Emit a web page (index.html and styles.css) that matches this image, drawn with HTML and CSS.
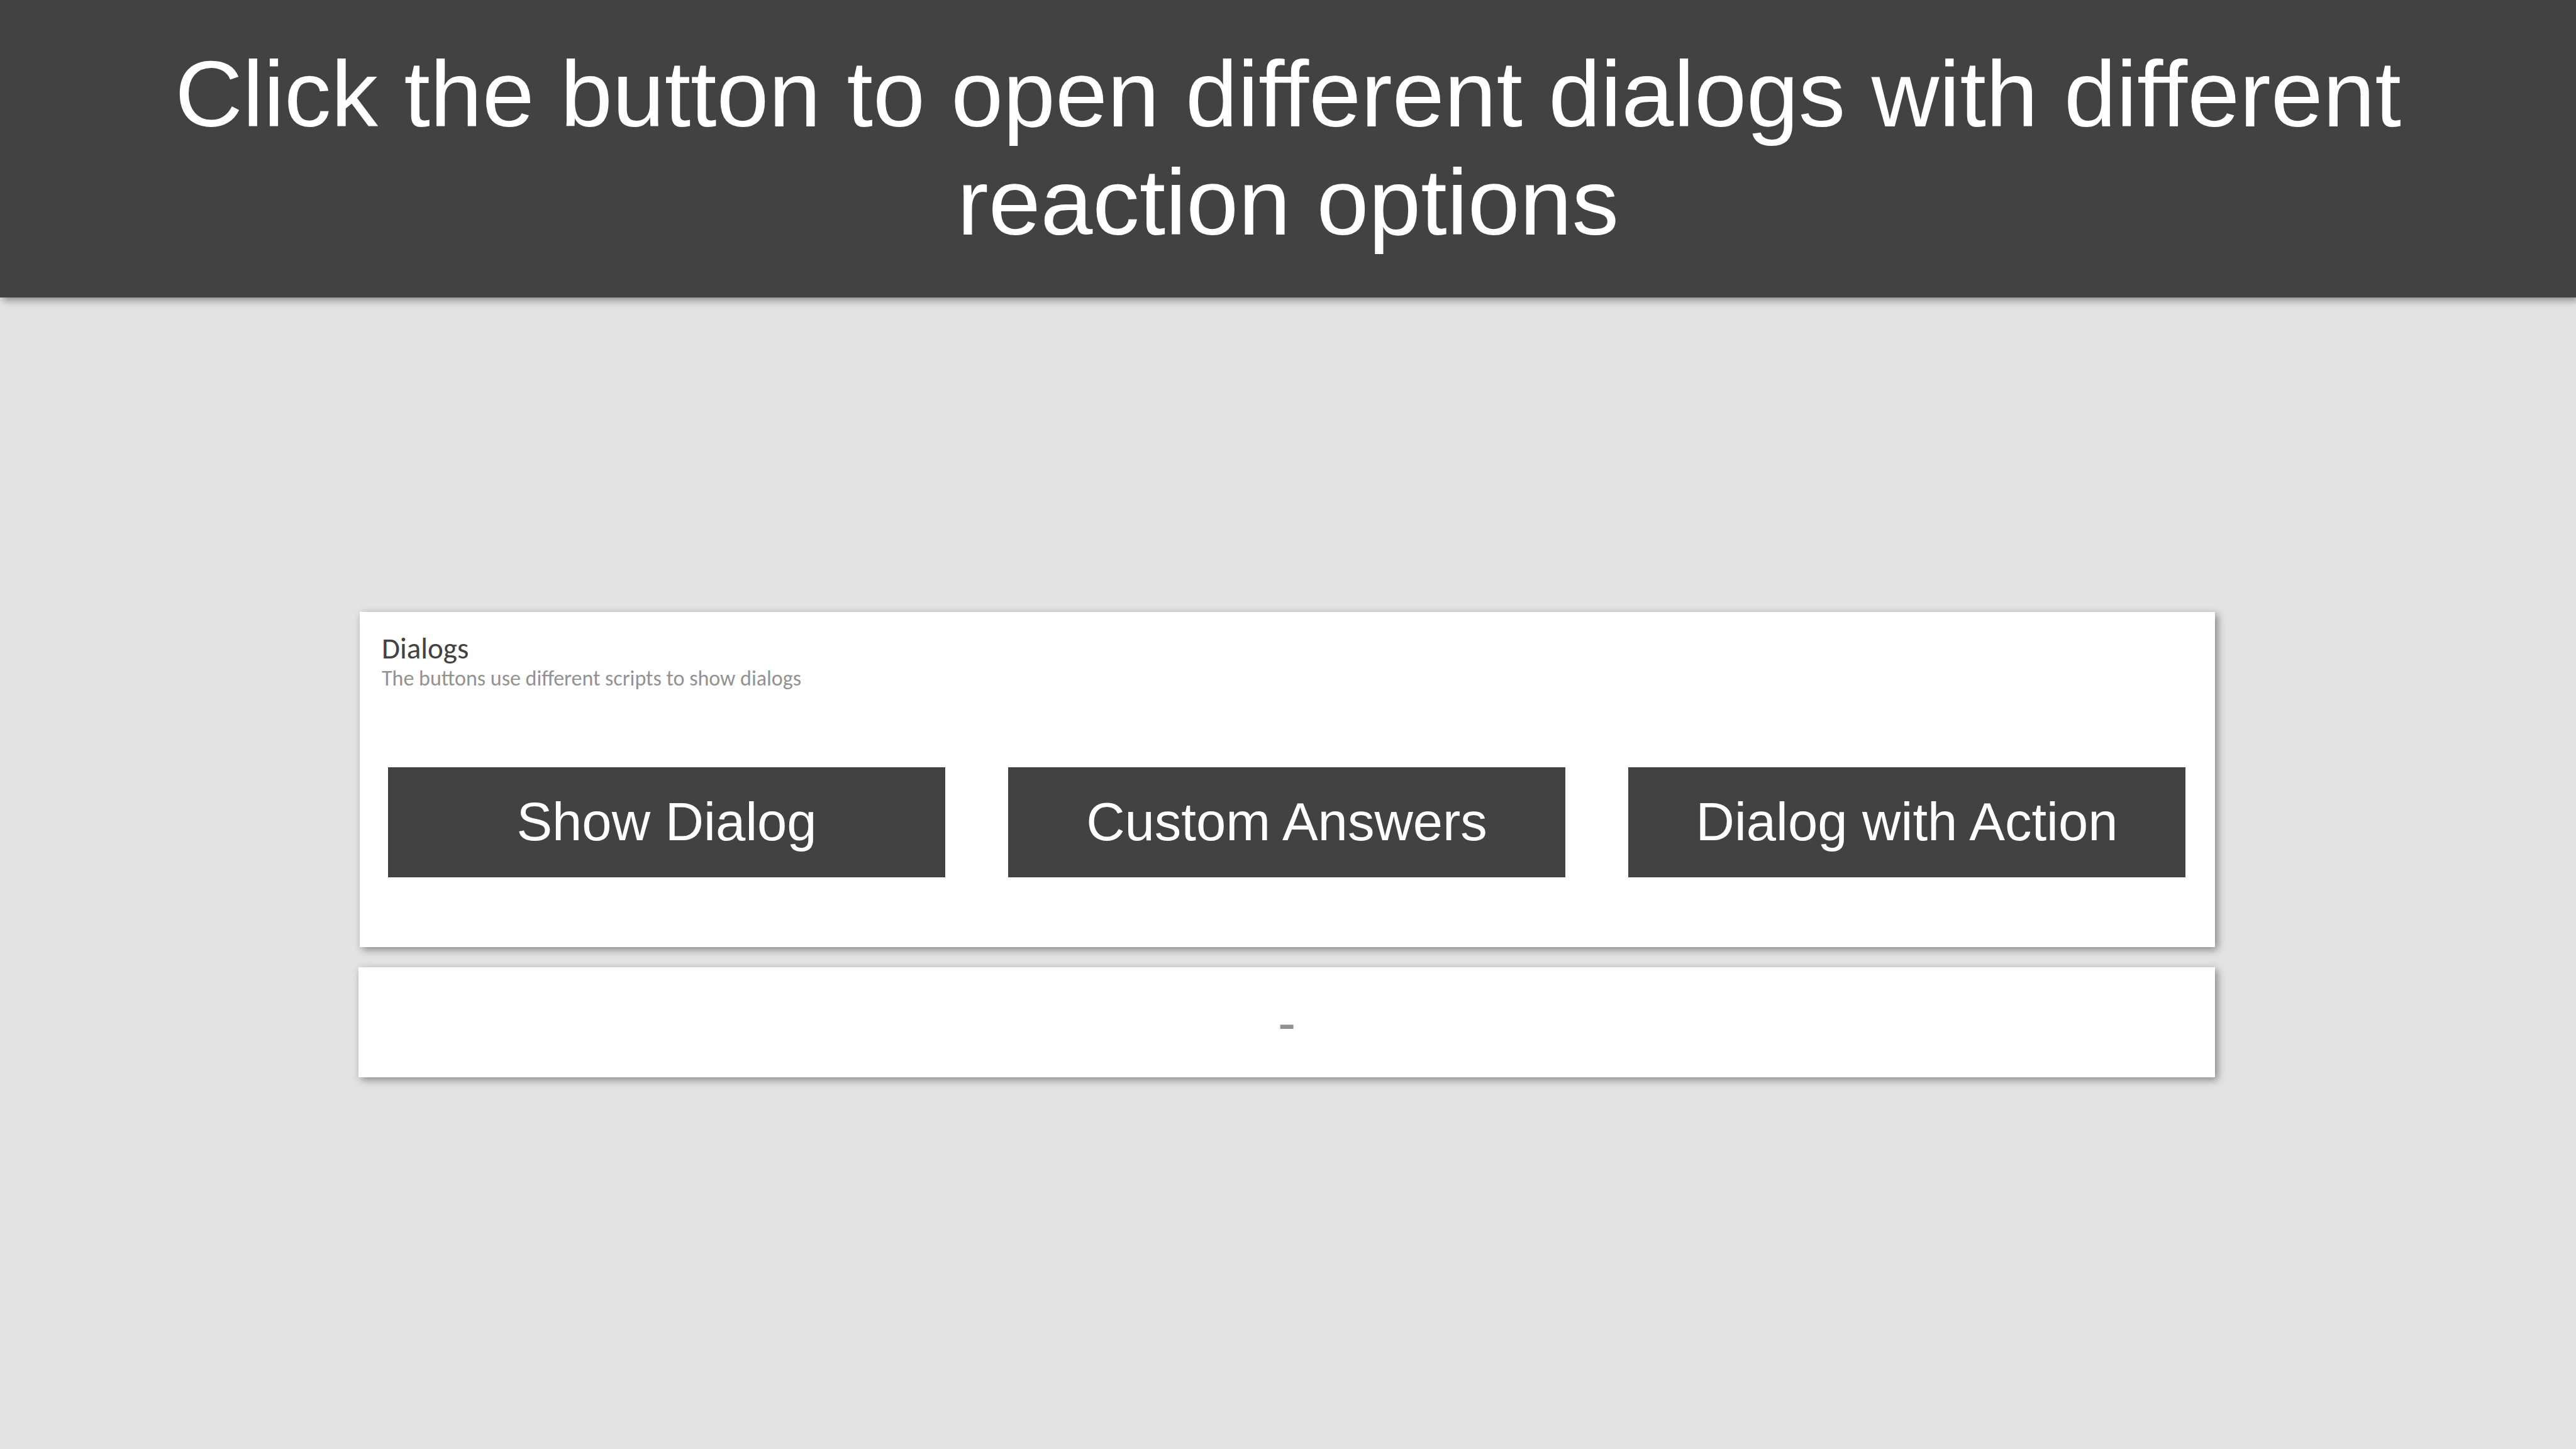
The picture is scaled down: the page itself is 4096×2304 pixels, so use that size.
FILE: index.html
```
<!DOCTYPE html>
<html lang="en">
<head>
<meta charset="utf-8">
<title>Dialogs</title>
<link rel="stylesheet" href="styles.css">
</head>
<body>
<header class="banner">
  <h1 class="banner-title">Click the button to open different dialogs with different reaction options</h1>
</header>
<main class="content">
  <section class="card dialogs" aria-labelledby="dialogs-title">
    <h2 class="card-title" id="dialogs-title">Dialogs</h2>
    <p class="card-subtitle">The buttons use different scripts to show dialogs</p>
    <div class="actions">
      <button class="action" type="button">Show Dialog</button>
      <button class="action" type="button">Custom Answers</button>
      <button class="action" type="button">Dialog with Action</button>
    </div>
  </section>
  <output class="card result">-</output>
</main>
</body>
</html>
```
FILE: styles.css
```
* {
  box-sizing: border-box;
}

body {
  margin: 0;
  min-height: 100vh;
  background: #e3e3e3;
  font-family: "Liberation Sans", Arial, sans-serif;
}

.banner {
  padding: 64px 200px 65px;
  background: #424242;
  box-shadow: 4px 4px 12px rgba(0, 0, 0, 0.42);
}

.banner-title {
  margin: 0;
  color: #fff;
  font-size: 149px;
  font-weight: 400;
  line-height: 172px;
  text-align: center;
}

.content {
  display: flex;
  flex-direction: column;
  gap: 32px;
  padding: 500px 574px 0 570px;
}

.card {
  background: #fff;
  box-shadow: 4px 4px 12px rgba(0, 0, 0, 0.42);
}

.dialogs {
  margin-left: 2px;
  padding: 30px 47px 111px 45px;
}

.card-title,
.card-subtitle {
  margin: 0 0 0 -10px;
  font-family: Carlito, Lato, sans-serif;
  font-weight: 400;
}

.card-title {
  color: #424242;
  font-size: 47px;
  line-height: 56px;
}

.card-subtitle {
  color: #929292;
  font-size: 34px;
  line-height: 40px;
}

.actions {
  display: grid;
  grid-template-columns: repeat(3, 1fr);
  gap: 100px;
  margin-top: 121px;
}

.action {
  height: 175px;
  padding: 0 0 2px;
  border: 0;
  border-radius: 0;
  background: #424242;
  color: #fff;
  font-family: inherit;
  font-size: 85px;
}

.result {
  display: block;
  color: #929292;
  font-size: 86px;
  line-height: 175px;
  text-align: center;
}
```
